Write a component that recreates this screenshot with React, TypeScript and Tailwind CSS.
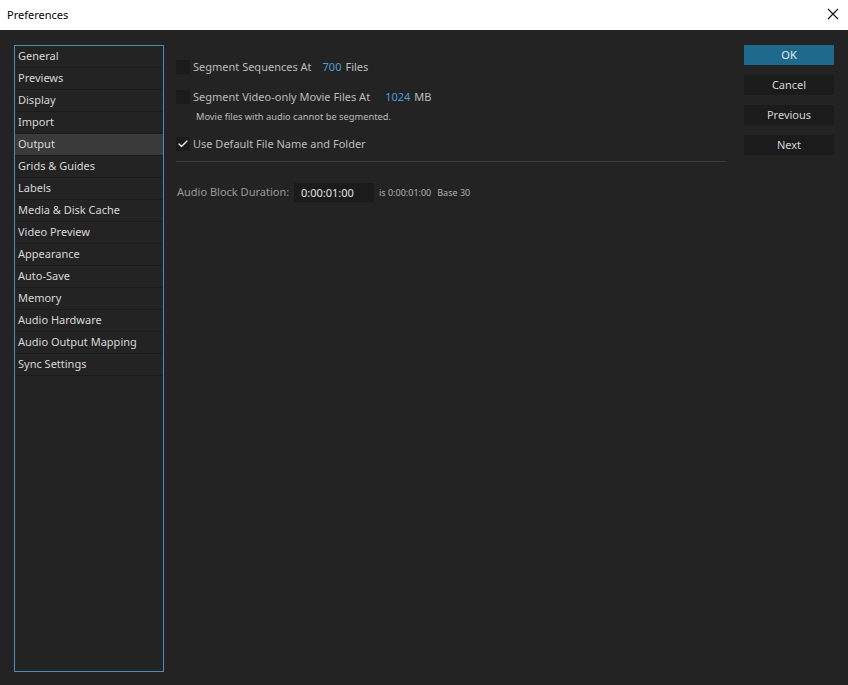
import { Check } from 'lucide-react';

const font = { fontFamily: '"Segoe UI", "Noto Sans", "Liberation Sans", sans-serif' };

const sections = [
  'General',
  'Previews',
  'Display',
  'Import',
  'Output',
  'Grids & Guides',
  'Labels',
  'Media & Disk Cache',
  'Video Preview',
  'Appearance',
  'Auto-Save',
  'Memory',
  'Audio Hardware',
  'Audio Output Mapping',
  'Sync Settings',
];

function Box({ checked }: { checked?: boolean }) {
  return (
    <div className="w-[14px] h-[14px] bg-[#1b1b1b] flex items-center justify-center shrink-0">
      {checked && <Check className="w-[12px] h-[12px] text-white" strokeWidth={2.5} />}
    </div>
  );
}

function SideButton({ label, primary }: { label: string; primary?: boolean }) {
  return (
    <button
      className={
        primary
          ? 'h-[20px] w-[90px] bg-[#1f6a8c] text-[#e8e8e8] text-[11px] leading-[20px]'
          : 'h-[20px] w-[90px] bg-[#1b1b1b] text-[#d6d6d6] text-[11px] leading-[20px]'
      }
    >
      {label}
    </button>
  );
}

export default function App() {
  return (
    <div className="w-[848px] h-[685px] flex flex-col overflow-hidden" style={font}>
      {/* title bar */}
      <div className="h-[30px] bg-white flex items-center justify-between pl-[7px] pr-[9px]">
        <span className="text-[11px] text-black">Preferences</span>
        <svg width="12" height="12" viewBox="0 0 12 12" className="mb-[2px]">
          <path d="M1 1 L11 11 M11 1 L1 11" stroke="#111" strokeWidth="1.1" />
        </svg>
      </div>

      <div className="flex-1 bg-[#232323] flex pt-[15px] pl-[14px] pb-[13px] pr-[14px]">
        {/* section list */}
        <div className="w-[150px] border border-[#4a8db5] flex flex-col">
          {sections.map((s) => (
            <div
              key={s}
              className={
                s === 'Output'
                  ? 'h-[22px] border-b border-[#1b1b1b] bg-[#3a3a3a] pl-[3px] text-[11px] leading-[19px] text-[#d8d8d8]'
                  : 'h-[22px] border-b border-[#1b1b1b] pl-[3px] text-[11px] leading-[19px] text-[#d8d8d8]'
              }
            >
              {s}
            </div>
          ))}
        </div>

        {/* settings */}
        <div className="w-[550px] ml-[12px] flex flex-col text-[11px] text-[#bdbdbd]">
          <div className="mt-[12px] h-[20px] flex items-center">
            <Box />
            <span className="ml-[3px]">Segment Sequences At</span>
            <span className="ml-[11px] text-[#4b9fd6]">700</span>
            <span className="ml-[4px]">Files</span>
          </div>
          <div className="mt-[10px] h-[20px] flex items-center">
            <Box />
            <span className="ml-[3px]">Segment Video-only Movie Files At</span>
            <span className="ml-[15px] text-[#4b9fd6]">1024</span>
            <span className="ml-[4px]">MB</span>
          </div>
          <div className="mt-[3px] pl-[20px] text-[9.3px] leading-[14px] text-[#bcbcbc]">
            Movie files with audio cannot be segmented.
          </div>
          <div className="mt-[10px] h-[20px] flex items-center">
            <Box checked />
            <span className="ml-[3px]">Use Default File Name and Folder</span>
          </div>
          <div className="mt-[7px] h-px bg-[#3c3c3c]" />
          <div className="mt-[21px] h-[19px] flex items-center">
            <span className="w-[118px] pl-[1px] whitespace-nowrap text-[#9a9a9a]">Audio Block Duration:</span>
            <div className="w-[80px] h-[19px] bg-[#1b1b1b] pl-[7px] text-[#e2e2e2] leading-[20px]">0:00:01:00</div>
            <span className="ml-[5px] text-[9px] text-[#b0b0b0]">is 0:00:01:00</span>
            <span className="ml-[6px] text-[9px] text-[#b0b0b0]">Base 30</span>
          </div>
        </div>

        {/* buttons */}
        <div className="ml-[18px] flex flex-col gap-[10px]">
          <SideButton label="OK" primary />
          <SideButton label="Cancel" />
          <SideButton label="Previous" />
          <SideButton label="Next" />
        </div>
      </div>
    </div>
  );
}
